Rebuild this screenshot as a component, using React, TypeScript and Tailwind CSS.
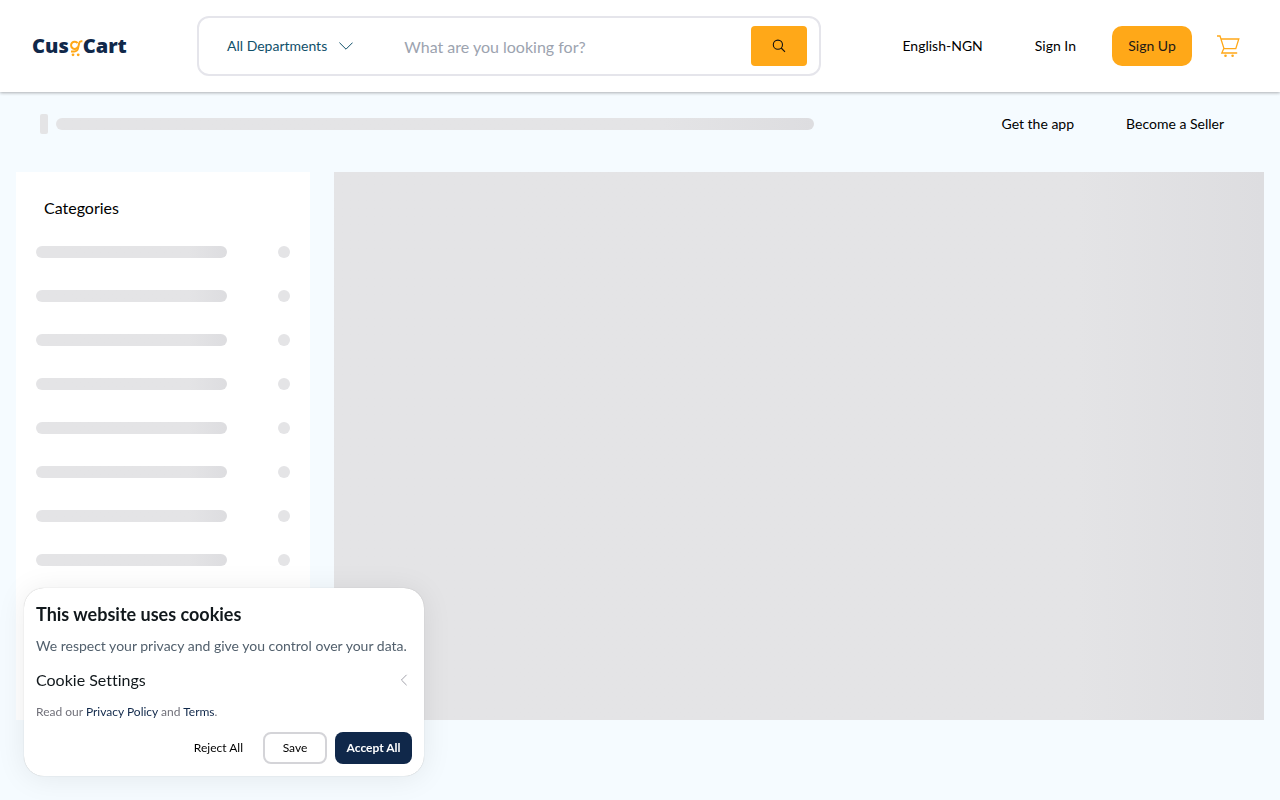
import type { ReactNode } from "react";

const ROWS = 8;

function Logo() {
  return (
    <a
      href="#"
      aria-label="CusgCart home"
      className="flex items-center font-['Open_Sans','Lato',sans-serif] text-xl leading-6 font-extrabold text-[#10284a]"
    >
      <span>Cus</span>
      <svg viewBox="0 0 14 24" className="w-3.5 h-6 shrink-0" fill="none" stroke="#ffa818">
        <path d="M8.6 9.2A3.6 3.6 0 1 0 9 12.6" strokeWidth="2" />
        <path d="M13.4 7.2h-1.2c-1.2 0-1.8.6-2 1.8L9 14.4c-.5 2.2-1.8 3-3.6 3H2" strokeWidth="2" />
        <circle cx="4" cy="20.8" r="1.4" fill="#ffa818" stroke="none" />
        <circle cx="9.2" cy="20.8" r="1.4" fill="#ffa818" stroke="none" />
      </svg>
      <span>Cart</span>
    </a>
  );
}

function CartIcon() {
  return (
    <svg viewBox="0 0 24 24" className="w-6 h-6" fill="none" stroke="#ffa818" strokeWidth="1.3">
      <path d="M1 2h3l4 12.6h11.8l3-9.6H5" />
      <path d="M7.8 14.6l-2 4.4h15.4" />
      <circle cx="9.5" cy="21.8" r="1.3" fill="#ffa818" stroke="none" />
      <circle cx="16.6" cy="21.8" r="1.3" fill="#ffa818" stroke="none" />
    </svg>
  );
}

function SearchIcon() {
  return (
    <svg viewBox="0 0 14 14" className="w-3.5 h-3.5" fill="none" stroke="#111" strokeWidth="1.1">
      <circle cx="5.9" cy="5.7" r="4.6" />
      <path d="M9.2 9l3.8 3.8" />
    </svg>
  );
}

function Header() {
  return (
    <header className="relative flex items-center h-[92px] pl-8 pr-10 bg-white shadow-[0_1px_3px_rgba(0,0,0,0.3)]">
      <div className="w-[165px] shrink-0">
        <Logo />
      </div>
      <form className="flex flex-1 items-center h-[60px] pl-7 pr-3 border-2 border-[#e5e5eb] rounded-xl">
        <button type="button" className="flex items-center gap-3 text-sm text-[#10506a] whitespace-nowrap">
          All Departments
          <svg viewBox="0 0 14 8" className="w-3.5 h-2" fill="none" stroke="currentColor" strokeWidth="1">
            <path d="M.4.6L7 7.2 13.6.6" />
          </svg>
        </button>
        <input
          type="text"
          aria-label="Search products"
          placeholder="What are you looking for?"
          className="flex-1 min-w-0 ml-[51px] h-10 text-base outline-none placeholder:text-[#9ca3af]"
        />
        <button
          type="submit"
          aria-label="Search"
          className="flex items-center justify-center w-14 h-10 rounded bg-[#ffa818]"
        >
          <SearchIcon />
        </button>
      </form>
      <nav className="flex items-center ml-[81px] text-sm text-black whitespace-nowrap">
        <button type="button">English-NGN</button>
        <a href="#" className="ml-13">
          Sign In
        </a>
        <button type="button" className="ml-9 w-20 h-10 rounded-[10px] bg-[#ffa818] text-[#1c1917]">
          Sign Up
        </button>
        <a href="#" aria-label="Cart" className="ml-6">
          <CartIcon />
        </a>
      </nav>
    </header>
  );
}

function SubNav() {
  return (
    <div className="flex items-center h-16 pl-10 pr-14">
      <div className="w-2 h-5 rounded-xs bg-[#e4e4e6]" />
      <div className="flex-1 h-3 ml-2 rounded-full bg-linear-to-r from-[#e4e4e6] from-80% to-[#dddde0]" />
      <nav className="flex gap-13 ml-47 text-sm text-black whitespace-nowrap">
        <a href="#">Get the app</a>
        <a href="#">Become a Seller</a>
      </nav>
    </div>
  );
}

function Categories() {
  return (
    <aside className="w-[294px] shrink-0 px-5 pt-6 bg-white">
      <h2 className="pl-2 text-base text-black">Categories</h2>
      <ul className="flex flex-col gap-8 mt-[26px]">
        {Array.from({ length: ROWS }, (_, i) => (
          <li key={i} className="flex items-center justify-between">
            <div className="w-3/4 h-3 rounded-full bg-linear-to-r from-[#e4e4e6] from-80% to-[#dddde0]" />
            <div className="w-3 h-3 rounded-full bg-[#e4e4e6]" />
          </li>
        ))}
      </ul>
    </aside>
  );
}

function PolicyLink({ children }: { children: ReactNode }) {
  return (
    <a href="#" className="text-[#10284a]">
      {children}
    </a>
  );
}

function CookieBanner() {
  return (
    <section
      aria-label="Cookie consent"
      className="fixed left-6 bottom-6 w-[400px] p-3 rounded-[20px] bg-white shadow-[0_0_1px_rgba(0,0,0,0.3),0_2px_30px_rgba(0,0,0,0.08)]"
    >
      <h2 className="mt-0.5 text-lg leading-6 font-bold text-[#11181c]">This website uses cookies</h2>
      <p className="mt-2.5 text-sm leading-5 text-[#52606d] whitespace-nowrap">
        We respect your privacy and give you control over your data.
      </p>
      <button type="button" className="flex items-center justify-between w-full mt-3 pr-1 text-base leading-6 text-[#11181c]">
        Cookie Settings
        <svg viewBox="0 0 8 12" className="w-2 h-3" fill="none" stroke="#a1a1aa" strokeWidth="1">
          <path d="M6.6.8L1.4 6l5.2 5.2" />
        </svg>
      </button>
      <p className="mt-3 text-xs leading-4 text-[#71717a]">
        Read our <PolicyLink>Privacy Policy</PolicyLink> and <PolicyLink>Terms</PolicyLink>.
      </p>
      <div className="flex justify-end gap-2 mt-3 text-xs text-black">
        <button type="button" className="h-8 px-3">
          Reject All
        </button>
        <button type="button" className="w-16 h-8 border-2 border-[#d4d4d8] rounded-lg">
          Save
        </button>
        <button type="button" className="h-8 w-[77px] rounded-lg bg-[#10284a] font-bold text-white">
          Accept All
        </button>
      </div>
    </section>
  );
}

export default function App() {
  return (
    <div className="flex flex-col min-h-screen bg-[#f5fbff] font-['Lato',sans-serif] [font-variant-ligatures:none]">
      <Header />
      <SubNav />
      <main className="flex flex-1 gap-6 px-4 pt-4 pb-20">
        <Categories />
        <div className="flex-1 bg-linear-to-r from-[#e4e4e6] from-80% to-[#dddde0]" />
      </main>
      <CookieBanner />
    </div>
  );
}
